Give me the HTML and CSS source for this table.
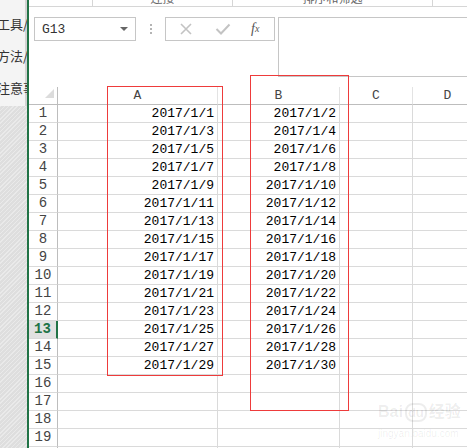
FILE: index.html
```html
<!DOCTYPE html>
<html lang="zh-CN">
<head>
    <meta charset="UTF-8">
    <title>Excel 日期</title>
    <link rel="stylesheet" href="styles.css">
</head>
<body>
<div class="app">
    <aside class="side">
        <div class="side-top">
            <div class="side-item">工具/原料</div>
            <div class="side-item">方法/步骤</div>
            <div class="side-item">注意事项</div>
        </div>
        <div class="side-rest"></div>
    </aside>

    <div class="excel">
        <div class="ribbon-foot">
            <div class="group g1"></div>
            <div class="group g2"><span>连接</span></div>
            <div class="group g3"><span>排序和筛选</span></div>
            <div class="group g4"></div>
        </div>

        <div class="formula-bar">
            <div class="name-box">
                <span class="cell-ref">G13</span>
                <i class="caret"></i>
            </div>
            <div class="grip"><b></b><b></b><b></b></div>
            <div class="fx-box">
                <svg width="14" height="14" viewBox="0 0 14 14"><path d="M2 2 L12 12 M12 2 L2 12" stroke="#c3c3c3" stroke-width="1.6" fill="none"/></svg>
                <svg width="16" height="14" viewBox="0 0 16 14"><path d="M1.5 7 L6 11.5 L14.5 2.5" stroke="#c3c3c3" stroke-width="2" fill="none"/></svg>
                <span class="fx">f<sub>x</sub></span>
            </div>
            <div class="formula-input"></div>
        </div>

        <div class="grid">
            <div class="c corner"><i></i></div>
            <div class="c hd">A</div>
            <div class="c hd">B</div>
            <div class="c hd">C</div>
            <div class="c hd">D</div>

            <div class="c rn">1</div><div class="c v">2017/1/1</div><div class="c v">2017/1/2</div><div class="c"></div><div class="c"></div>
            <div class="c rn">2</div><div class="c v">2017/1/3</div><div class="c v">2017/1/4</div><div class="c"></div><div class="c"></div>
            <div class="c rn">3</div><div class="c v">2017/1/5</div><div class="c v">2017/1/6</div><div class="c"></div><div class="c"></div>
            <div class="c rn">4</div><div class="c v">2017/1/7</div><div class="c v">2017/1/8</div><div class="c"></div><div class="c"></div>
            <div class="c rn">5</div><div class="c v">2017/1/9</div><div class="c v">2017/1/10</div><div class="c"></div><div class="c"></div>
            <div class="c rn">6</div><div class="c v">2017/1/11</div><div class="c v">2017/1/12</div><div class="c"></div><div class="c"></div>
            <div class="c rn">7</div><div class="c v">2017/1/13</div><div class="c v">2017/1/14</div><div class="c"></div><div class="c"></div>
            <div class="c rn">8</div><div class="c v">2017/1/15</div><div class="c v">2017/1/16</div><div class="c"></div><div class="c"></div>
            <div class="c rn">9</div><div class="c v">2017/1/17</div><div class="c v">2017/1/18</div><div class="c"></div><div class="c"></div>
            <div class="c rn">10</div><div class="c v">2017/1/19</div><div class="c v">2017/1/20</div><div class="c"></div><div class="c"></div>
            <div class="c rn">11</div><div class="c v">2017/1/21</div><div class="c v">2017/1/22</div><div class="c"></div><div class="c"></div>
            <div class="c rn">12</div><div class="c v">2017/1/23</div><div class="c v">2017/1/24</div><div class="c"></div><div class="c"></div>
            <div class="c rn active">13</div><div class="c v">2017/1/25</div><div class="c v">2017/1/26</div><div class="c"></div><div class="c"></div>
            <div class="c rn">14</div><div class="c v">2017/1/27</div><div class="c v">2017/1/28</div><div class="c"></div><div class="c"></div>
            <div class="c rn">15</div><div class="c v">2017/1/29</div><div class="c v">2017/1/30</div><div class="c"></div><div class="c"></div>
            <div class="c rn">16</div><div class="c"></div><div class="c"></div><div class="c"></div><div class="c"></div>
            <div class="c rn">17</div><div class="c"></div><div class="c"></div><div class="c"></div><div class="c"></div>
            <div class="c rn">18</div><div class="c"></div><div class="c"></div><div class="c"></div><div class="c"></div>
            <div class="c rn">19</div><div class="c"></div><div class="c"></div><div class="c"></div><div class="c"></div>
            <div class="c rn">20</div><div class="c"></div><div class="c"></div><div class="c"></div><div class="c"></div>
        </div>
    </div>

    <!-- annotation boxes drawn over the sheet -->
    <div class="mark mark-a"></div>
    <div class="mark mark-b"></div>

    <div class="watermark">
        <div class="wm-logo">Bai<span class="paw">du</span>经验</div>
        <div class="wm-url">jingyan.baidu.com</div>
    </div>
</div>
</body>
</html>
```

FILE: styles.css
```css
body {
    margin: 0;
    background: #fff;
    font-family: "Liberation Mono", "Noto Sans CJK SC", monospace;
    color: #000;
}
.app {
    position: relative;
    width: 467px;
    height: 448px;
    overflow: hidden;
    display: flex;
}

/* left article strip */
.side {
    width: 27px;
    flex: none;
    display: flex;
    flex-direction: column;
    overflow: hidden;
}
.side-top {
    height: 106px;
    background: #f4f4f4;
    border-right: 2px solid #d2d2d2;
    box-sizing: border-box;
}
.side-item {
    font-family: "Noto Sans CJK SC", sans-serif;
    font-size: 13px;
    color: #333;
    white-space: nowrap;
    margin-left: -3px;
    height: 32px;
    line-height: 32px;
}
.side-item:first-child {
    margin-top: 8px;
}
.side-rest {
    flex: 1;
    background-color: #dedede;
    background-image: repeating-linear-gradient(135deg, rgba(255,255,255,0.35) 0 1px, transparent 1px 3px);
}

/* spreadsheet */
.excel {
    flex: 1;
    border-left: 2px solid #217346;
    min-width: 0;
}
.ribbon-foot {
    display: flex;
    height: 7px;
    border-bottom: 1px solid #d6d6d6;
    box-sizing: border-box;
    overflow: hidden;
}
.group {
    flex: none;
    height: 6px;
    border-right: 1px solid #d6d6d6;
    box-sizing: border-box;
    text-align: center;
    overflow: hidden;
}
.group span {
    display: block;
    font-family: "Noto Sans CJK SC", sans-serif;
    font-size: 12px;
    line-height: 12px;
    margin-top: -8px;
    color: #666;
}
.g1 { width: 64px; }
.g2 { width: 140px; }
.g3 { width: 200px; }
.g4 { flex: 1; border-right: none; }

.formula-bar {
    display: flex;
    align-items: flex-start;
    height: 80px;
    padding-top: 10px;
    box-sizing: border-box;
}
.name-box {
    width: 102px;
    height: 24px;
    margin-left: 5px;
    border: 1px solid #c6c6c6;
    box-sizing: border-box;
    display: flex;
    align-items: center;
    padding: 0 7px;
    font-size: 13px;
    color: #333;
}
.cell-ref {
    flex: 1;
}
.caret {
    width: 0;
    height: 0;
    border-left: 4px solid transparent;
    border-right: 4px solid transparent;
    border-top: 4px solid #666;
}
.grip {
    width: 2px;
    margin: 7px 13px 0 14px;
    display: flex;
    flex-direction: column;
    gap: 2px;
}
.grip b {
    width: 2px;
    height: 2px;
    background: #b4b4b4;
}
.fx-box {
    width: 110px;
    height: 24px;
    border: 1px solid #c6c6c6;
    box-sizing: border-box;
    display: flex;
    align-items: center;
    padding-left: 13px;
    gap: 22px;
}
.fx {
    font-family: "Liberation Serif", serif;
    font-style: italic;
    font-size: 14px;
    color: #555;
    margin-left: -2px;
}
.fx sub {
    font-size: 10px;
    vertical-align: 1px;
}
.formula-input {
    flex: 1;
    height: 60px;
    margin-left: 3px;
    border: 1px solid #c6c6c6;
    border-right: none;
    box-sizing: border-box;
}

.grid {
    display: grid;
    grid-template-columns: 29px 160px 122px 73px 70px;
    grid-auto-rows: 18px;
}
.c {
    border-right: 1px solid #dadada;
    border-bottom: 1px solid #dadada;
    box-sizing: border-box;
    font-size: 13px;
    line-height: 17px;
    white-space: nowrap;
}
.hd, .corner {
    border-bottom-color: #bdbdbd;
    border-right-color: #e3e3e3;
    text-align: center;
    color: #444;
}
.corner {
    border-right-color: #bdbdbd;
    display: flex;
    justify-content: flex-end;
    align-items: flex-end;
    padding: 0 3px 6px 0;
}
.corner i {
    width: 0;
    height: 0;
    border-left: 9px solid transparent;
    border-bottom: 9px solid #dcdcdc;
}
.rn {
    text-align: center;
    font-size: 14px;
    color: #444;
    border-right-color: #bdbdbd;
}
.rn.active {
    background: #e1e1e1;
    color: #217346;
    font-weight: bold;
    border-right: 2px solid #217346;
}
.v {
    text-align: right;
    padding-right: 3px;
}

/* red annotation frames */
.mark {
    position: absolute;
    border: 1px solid #ee3b3b;
    box-sizing: border-box;
}
.mark-a {
    left: 107px;
    top: 86px;
    width: 116px;
    height: 290px;
}
.mark-b {
    left: 250px;
    top: 75px;
    width: 99px;
    height: 336px;
}

.watermark {
    position: absolute;
    left: 378px;
    top: 401px;
    width: 80px;
    color: rgba(0, 0, 0, 0.08);
    font-family: "Liberation Sans", "Noto Sans CJK SC", sans-serif;
    text-align: center;
    white-space: nowrap;
}
.wm-logo {
    font-size: 16px;
    font-weight: bold;
    line-height: 22px;
}
.paw {
    border: 2px solid rgba(0, 0, 0, 0.07);
    border-radius: 8px;
    padding: 0 1px;
    margin: 0 2px;
    font-size: 13px;
}
.wm-url {
    font-size: 10px;
    line-height: 13px;
    margin-top: 3px;
}
```
